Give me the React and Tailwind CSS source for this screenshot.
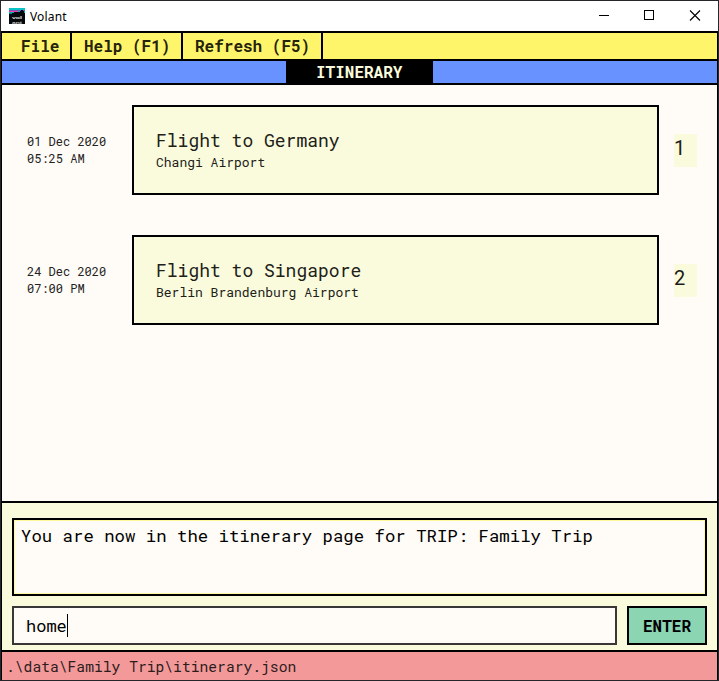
const menus = [
  { label: "File", className: "w-[70px] pl-[19px]" },
  { label: "Help (F1)", className: "w-[111px] pl-[12px]" },
  { label: "Refresh (F5)", className: "w-[140px] pl-[12px]" },
];

const trips = [
  { id: 1, date: "01 Dec 2020", time: "05:25 AM", title: "Flight to Germany", place: "Changi Airport" },
  { id: 2, date: "24 Dec 2020", time: "07:00 PM", title: "Flight to Singapore", place: "Berlin Brandenburg Airport" },
];

function Logo() {
  return (
    <svg width="16" height="16" viewBox="0 0 16 16" shapeRendering="crispEdges">
      <rect width="16" height="16" fill="#06090b" />
      <path d="M0 0h16v2H0z" fill="#08c4c4" />
      <path d="M0 2h12v1H0zM14 2h2v1h-2z" fill="#7657bd" />
      <path d="M0 3h9v1H0z" fill="#e83fa4" />
      <path d="M0 4h5v1H0zM9 3h2v1H9zM15 3h1v2h-1z" fill="#07b0b0" />
      <path d="M0 5h3v1H0z" fill="#078d8d" />
      <g fontWeight="700" fontSize="4.3" fontFamily="Liberation Sans">
        <text x="3" y="10.6" textLength="10" lengthAdjust="spacingAndGlyphs" fill="#e5e9e9">vol</text>
        <text x="3" y="15.6" textLength="10" lengthAdjust="spacingAndGlyphs" fill="#c5c9c9">ant</text>
      </g>
    </svg>
  );
}

function TitleBar() {
  return (
    <header className="flex h-[30px] items-center bg-white pl-2">
      <Logo />
      <span className="ml-[5px] mt-[2px] flex-1 font-['Noto_Sans',sans-serif] text-[12px] leading-4 tracking-[0.15px] text-black">Volant</span>
      <svg width="119" height="30" viewBox="0 0 119 30" fill="none" stroke="#000" shapeRendering="crispEdges">
        <path d="M0 14.5h10" />
        <rect x="45.5" y="9.5" width="9" height="9" />
        <path d="M91 9.5l10 10M101 9.5l-10 10" shapeRendering="auto" strokeWidth="1.1" />
      </svg>
    </header>
  );
}

function Trip({ trip }) {
  return (
    <li className="flex h-[90px] items-center">
      <div className="w-[130px] pl-[25px] text-[12px] leading-[17px] text-[#222]">
        <p>{trip.date}</p>
        <p>{trip.time}</p>
      </div>
      <div className="h-full w-[527px] border-2 border-black bg-[#fafbdc] pl-[22px] pt-[21px] text-[#202018]">
        <h2 className="text-[18px] leading-6">{trip.title}</h2>
        <p className="text-[13px] leading-5">{trip.place}</p>
      </div>
      <div className="ml-[15px] mt-[1px] h-[33px] w-[23px] bg-[#fafbdc] font-['Roboto',sans-serif] text-[20px] leading-[29px] text-[#1c1c1c]">
        {trip.id}
      </div>
    </li>
  );
}

export default function App() {
  return (
    <div className="flex h-[681px] w-[719px] flex-col overflow-hidden whitespace-pre border border-[#26262a] bg-black font-['Roboto_Mono','DejaVu_Sans_Mono',monospace]">
      <TitleBar />
      <main className="flex flex-1 flex-col border-l border-r border-black">
        <nav className="flex h-[30px] border-y-2 border-black bg-[#fff56a] text-[16px] font-bold leading-[26px] text-[#25230c]">
          {menus.map((m) => (
            <div key={m.label} className={`border-r-2 border-black ${m.className}`}>{m.label}</div>
          ))}
        </nav>
        <div className="flex h-6 justify-center border-b-2 border-black bg-[#6892ff]">
          <h1 className="w-[147px] bg-black pl-[30px] text-[16px] font-bold leading-[22px] text-[#fafbdc]">ITINERARY</h1>
        </div>
        <ul className="flex h-[416px] flex-col gap-10 bg-[#fffbf6] pt-5">
          {trips.map((t) => <Trip key={t.id} trip={t} />)}
        </ul>
        <section className="h-[149px] border-t-2 border-black bg-[#fafbdc] px-[10px] pt-[15px]">
          <div className="h-[78px] border-2 border-black bg-[#fffbf6]">
            <p className="h-full border border-[#fff99d] pl-[6px] pt-[3px] text-[17.33px] leading-6 text-black">
              You are now in the itinerary page for TRIP: Family Trip
            </p>
          </div>
          <div className="mt-[10px] flex h-[39px] gap-[10px]">
            <div className="flex w-[605px] items-center border-2 border-[#383636] bg-[#fffbf6] pl-3 text-[17px] text-black">
              home<span className="h-[23px] w-px bg-black" />
            </div>
            <button className="w-20 border-2 border-black bg-[#8bd5b3] text-[16px] font-bold text-black">ENTER</button>
          </div>
        </section>
        <footer className="h-[30px] border-t-2 border-black bg-[#f39999] pl-1 text-[14.67px] leading-[29px] text-[#2c1c1c]">
          {".\\data\\Family Trip\\itinerary.json"}
        </footer>
      </main>
    </div>
  );
}
